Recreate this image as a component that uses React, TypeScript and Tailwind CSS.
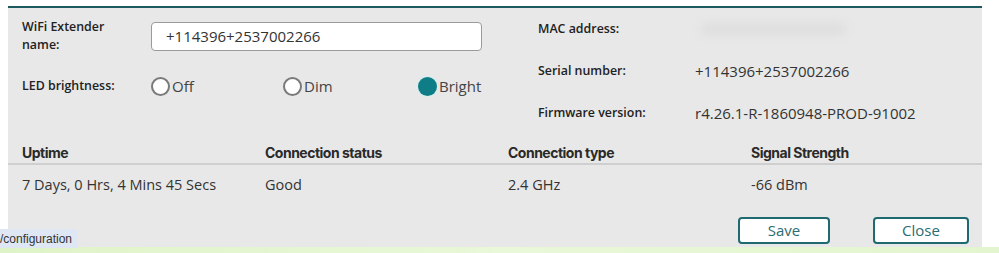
import React from "react";

const font = { fontFamily: '"Open Sans", "DejaVu Sans", sans-serif' };

type Opt = { label: string; checked?: boolean; width: string };

const options: Array<Opt> = [
  { label: "Off", width: "w-[132px]" },
  { label: "Dim", width: "w-[135px]" },
  { label: "Bright", checked: true, width: "w-[80px]" },
];

const info = [
  { label: "MAC address:", value: null },
  { label: "Serial number:", value: "+114396+2537002266" },
  { label: "Firmware version:", value: "r4.26.1-R-1860948-PROD-91002" },
];

const cols = [
  { head: "Uptime", value: "7 Days, 0 Hrs, 4 Mins 45 Secs" },
  { head: "Connection status", value: "Good" },
  { head: "Connection type", value: "2.4 GHz" },
  { head: "Signal Strength", value: "-66 dBm" },
];

const Radio = ({ label, checked, width }: Opt) => (
  <label className={`flex items-center gap-[2px] ${width}`}>
    {checked ? (
      <span className="block h-[19px] w-[19px] rounded-full bg-[#0f7d86] ring-1 ring-[#d6eef0]" />
    ) : (
      <span className="block h-[19px] w-[19px] rounded-full border-2 border-[#7a7a7a] bg-white" />
    )}
    <span className="text-[15px] text-[#444]">{label}</span>
  </label>
);

export default function App() {
  return (
    <div className="relative h-[253px] w-[999px] overflow-hidden bg-white" style={font}>
      <div className="pt-[6px]">
        {/* Panel */}
        <div className="ml-[8px] h-[241px] w-[974px] overflow-hidden border-t-2 border-[#1d5a60] bg-[#e8e8e8]">
          <div className="flex h-[133px] px-[14px]">
            {/* left */}
            <div className="w-[516px]">
              <div className="flex items-start pt-[10px]">
                <div className="w-[129px] text-[12.4px] font-semibold leading-[18px] text-[#222]">
                  WiFi Extender
                  <br />
                  name:
                </div>
                <div className="mt-[4px] flex h-[29px] w-[331px] items-center rounded-[4px] border border-[#9a9a9a] bg-white pl-[14px] text-[15px] text-[#333]">
                  +114396+2537002266
                </div>
              </div>
              <div className="mt-[22px] flex h-[20px] items-center">
                <div className="w-[129px] text-[12.4px] font-semibold text-[#222]">LED brightness:</div>
                {options.map((o) => (
                  <Radio key={o.label} {...o} />
                ))}
              </div>
            </div>
            {/* right */}
            <div className="flex flex-col">
              {info.map((r) => (
                <div key={r.label} className="flex h-[42px] items-center">
                  <div className="w-[157px] text-[12.4px] font-semibold text-[#222]">{r.label}</div>
                  {r.value ? (
                    <div className="text-[15px] text-[#333]">{r.value}</div>
                  ) : (
                    <div className="ml-[6px] h-[12px] w-[145px] rounded-full bg-[#dedede] blur-[4px]" />
                  )}
                </div>
              ))}
            </div>
          </div>

          {/* Status table */}
          <div>
            <div className="flex h-[24px] items-center border-b-2 border-[#cfcfcf] pl-[14px]">
              {cols.map((c) => (
                <div
                  key={c.head}
                  className="w-[243px] shrink-0 text-[14px] font-bold tracking-[-0.5px] text-[#2a2a2a]"
                  style={{ fontFamily: "Inter, sans-serif" }}
                >
                  {c.head}
                </div>
              ))}
            </div>
            <div className="flex h-[40px] items-center pl-[14px]">
              {cols.map((c) => (
                <div key={c.head} className="w-[243px] shrink-0 text-[14.5px] text-[#333]">
                  {c.value}
                </div>
              ))}
            </div>
          </div>

          {/* Buttons */}
          <div className="mt-[12px] flex justify-end gap-[43px] pr-[13px]">
            <button className="h-[27px] w-[92px] rounded-[4px] border-2 border-[#1e6a70] bg-white text-[15px] text-[#2b6d72]">
              Save
            </button>
            <button className="h-[27px] w-[96px] rounded-[4px] border-2 border-[#1e6a70] bg-white text-[15px] text-[#2b6d72]">
              Close
            </button>
          </div>
        </div>
        <div className="h-[6px] w-full bg-gradient-to-r from-[#dff3c8] via-[#e8f8d8] to-[#e3f5cf]" />
      </div>

      {/* status bar tooltip */}
      <div
        className="absolute bottom-[5px] left-0 flex h-[19px] items-center rounded-tr-[3px] bg-[#dfe7f4] pr-[6px] text-[12px] text-[#333]"
        style={{ fontFamily: '"Liberation Sans", sans-serif' }}
      >
        /configuration
      </div>
    </div>
  );
}
